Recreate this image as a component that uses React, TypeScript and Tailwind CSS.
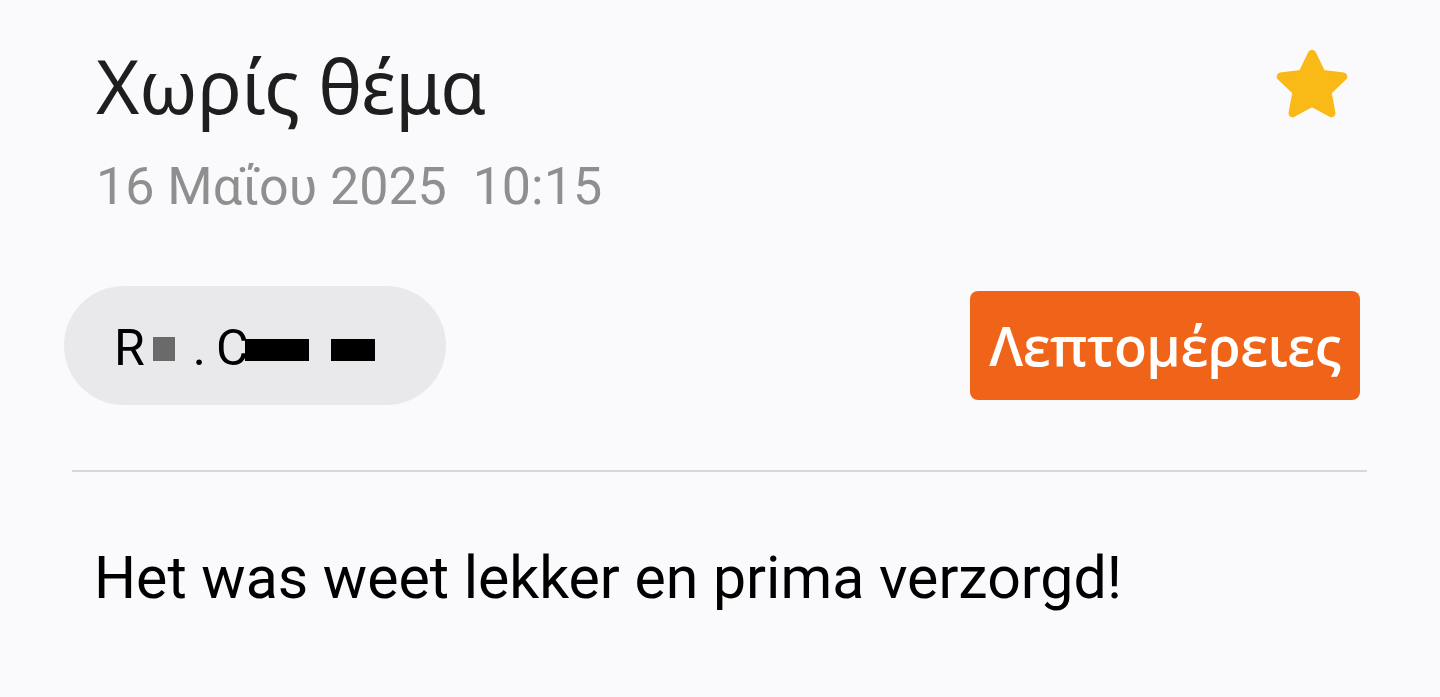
import React from 'react';

const Star: React.FC = () => (
  <svg width="86" height="86" viewBox="0 0 24 24" className="block">
    <path
      d="M12 2.2c.35 0 .66.2.8.52l2.45 5.1 5.6.74c.7.1.98.96.46 1.44l-4.1 3.88 1.03 5.56c.13.69-.6 1.22-1.22.88L12 17.6l-5.02 2.72c-.62.34-1.35-.19-1.22-.88l1.03-5.56-4.1-3.88c-.52-.48-.24-1.34.46-1.44l5.6-.74 2.45-5.1c.14-.32.45-.52.8-.52z"
      fill="#F9B916"
      stroke="#F9B916"
      strokeWidth="0.6"
      strokeLinejoin="round"
    />
  </svg>
);

const App: React.FC = () => {
  return (
    <div className="w-[1440px] h-[697px] bg-[#fafafc] overflow-hidden" style={{ fontFamily: 'Roboto, sans-serif' }}>
      {/* Header */}
      <div className="flex justify-between pl-[96px] pr-[85px] pt-[40px]">
        <div className="flex flex-col">
          <h1 className="text-[74px] leading-[92px] text-[#1e1e1e] font-['Noto_Sans',sans-serif] tracking-[-0.5px]">
            Χωρίς θέμα
          </h1>
          <p className="text-[52px] leading-[70px] text-[#8f8f8f] mt-[20px]">
            16 Μαΐου 2025&nbsp;&nbsp;10:15
          </p>
        </div>
        <div className="pt-[3px]">
          <Star />
        </div>
      </div>

      {/* Sender + action */}
      <div className="flex items-center justify-between pl-[64px] pr-[80px] mt-[64px]">
        <div className="h-[119px] w-[382px] rounded-full bg-[#e9e9eb] flex items-center pl-[50px]">
          <span className="text-[50px] text-black leading-none mt-[4px]">R</span>
          <span className="inline-block w-[22px] h-[24px] bg-[#6a6a6a] blur-[0.6px] mt-[6px] ml-[8px]" />
          <span className="text-[50px] text-black leading-none ml-[18px] mt-[4px]">.</span>
          <span className="text-[50px] text-black leading-none ml-[10px] mt-[4px]">C</span>
          <span className="inline-block w-[64px] h-[22px] bg-black blur-[0.6px] mt-[8px] -ml-[4px]" />
          <span className="inline-block w-[44px] h-[22px] bg-black blur-[0.6px] mt-[8px] ml-[22px]" />
        </div>
        <button className="h-[109px] w-[390px] rounded-[8px] bg-[#f06419] text-white text-[54px] font-semibold font-['Open_Sans',sans-serif] tracking-[-0.5px]">
          Λεπτομέρειες
        </button>
      </div>

      {/* Divider */}
      <div className="ml-[72px] mr-[73px] mt-[65px] h-[2px] bg-[#d8d8da]" />

      {/* Body */}
      <p className="pl-[94px] mt-[66px] text-[59px] leading-[80px] text-black">
        Het was weet lekker en prima verzorgd!
      </p>
    </div>
  );
};

export default App;
